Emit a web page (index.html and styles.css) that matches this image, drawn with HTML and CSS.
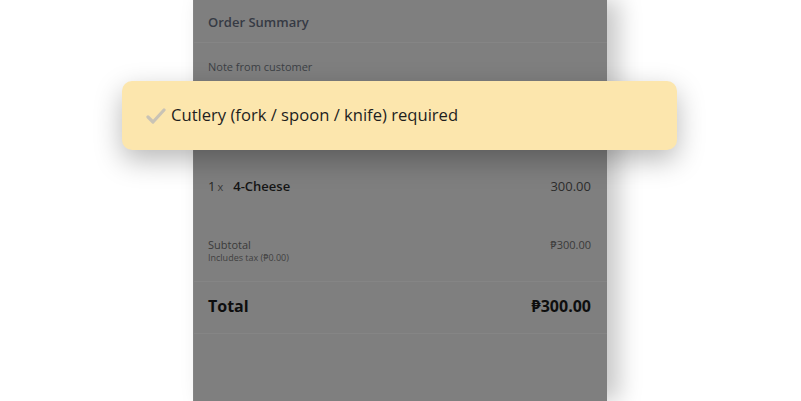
FILE: index.html
```html
<!DOCTYPE html>
<html>
<head>
<meta charset="utf-8">
<link rel="stylesheet" href="styles.css">
</head>
<body>
<div class="stage">
  <div class="panel">
    <div class="head">Order Summary</div>
    <div class="note">Note from customer</div>
    <div class="spacer"></div>
    <div class="item">
      <div class="item-name"><span class="qty">1<span class="x">x</span></span><span class="name">4-Cheese</span></div>
      <div class="price">300.00</div>
    </div>
    <div class="subtotal">
      <div>
        <div class="sub-label">Subtotal</div>
        <div class="sub-tax">Includes tax (₱0.00)</div>
      </div>
      <div class="sub-price">₱300.00</div>
    </div>
    <div class="total">
      <div>Total</div>
      <div>₱300.00</div>
    </div>
  </div>
  <div class="toast">
    <svg class="check" width="20" height="18" viewBox="0 0 20 18">
      <path d="M2 10 L7 15 L18 3" fill="none" stroke="#c9c3b5" stroke-width="3.2" stroke-linecap="round" stroke-linejoin="round"/>
    </svg>
    <span>Cutlery (fork / spoon / knife) required</span>
  </div>
</div>
</body>
</html>
```
FILE: styles.css
```css
html, body {
  margin: 0;
  padding: 0;
  background: #ffffff;
  width: 801px;
  height: 401px;
  overflow: hidden;
  font-family: "Open Sans", "Noto Sans", sans-serif;
}
.stage {
  position: relative;
  width: 801px;
  height: 401px;
}
.panel {
  margin-left: 193px;
  width: 414px;
  height: 401px;
  background: #7f7f7f;
  box-shadow: 12px 0 22px rgba(0,0,0,0.22);
  display: flex;
  flex-direction: column;
  box-sizing: border-box;
  border-left: 1px solid #858585;
}
.head {
  height: 43px;
  box-sizing: border-box;
  padding: 13px 0 0 14px;
  font-size: 13px;
  font-weight: 600;
  color: #363a44;
  border-bottom: 1px solid #858585;
}
.note {
  padding: 16px 0 0 14px;
  font-size: 11px;
  color: #3c3f45;
}
.spacer { height: 103px; }
.item {
  display: flex;
  justify-content: space-between;
  padding: 0 16px 0 14px;
  font-size: 13px;
  color: #151515;
}
.qty { margin-right: 10px; color: #262626; }
.x { font-size: 11px; color: #3a3a3a; margin-left: 2px; }
.name { font-weight: 600; }
.price { color: #2d2d2d; }
.subtotal {
  display: flex;
  justify-content: space-between;
  padding: 43px 16px 0 14px;
  height: 87px;
  box-sizing: border-box;
  border-bottom: 1px solid #858585;
}
.sub-label { font-size: 11px; color: #3a3a3a; line-height: 14px; }
.sub-tax { font-size: 9px; color: #3f3f3f; line-height: 12px; }
.sub-price { font-size: 11px; color: #3a3a3a; line-height: 14px; }
.total {
  display: flex;
  justify-content: space-between;
  align-items: center;
  height: 52px;
  box-sizing: border-box;
  padding: 0 16px 3px 14px;
  font-size: 16px;
  font-weight: 700;
  color: #0e0e0e;
  border-bottom: 1px solid #858585;
}
.toast {
  position: absolute;
  left: 122px;
  top: 81px;
  width: 555px;
  height: 69px;
  box-sizing: border-box;
  border-radius: 10px;
  background: #fce6ad;
  box-shadow: 0 10px 28px rgba(0,0,0,0.28);
  display: flex;
  align-items: center;
  padding-left: 24px;
  padding-bottom: 2px;
  font-size: 16.6px;
  color: #1e1e1e;
}
.check { margin-right: 5px; margin-top: 2px; }
```
